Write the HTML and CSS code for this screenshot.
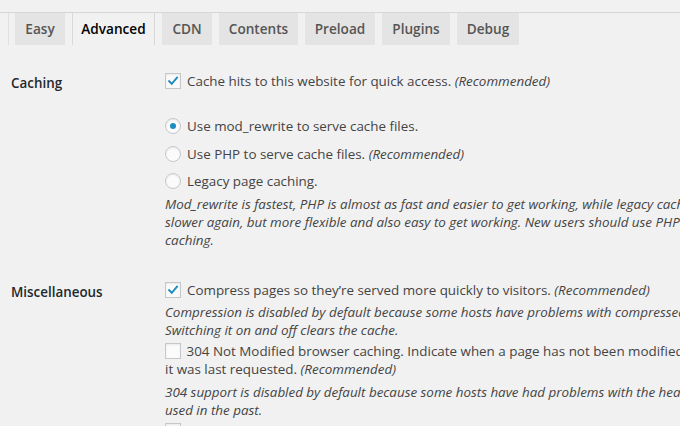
FILE: index.html
```html
<!DOCTYPE html>
<html>
<head>
<meta charset="utf-8">
<link rel="stylesheet" href="styles.css">
</head>
<body>
<div class="page">
  <div class="tabs">
    <span class="edge"></span>
    <span class="tab">Easy</span>
    <span class="tab active">Advanced</span>
    <span class="tab">CDN</span>
    <span class="tab">Contents</span>
    <span class="tab">Preload</span>
    <span class="tab">Plugins</span>
    <span class="tab">Debug</span>
  </div>

  <div class="row row-caching">
    <div class="label">Caching</div>
    <div class="field">
      <div class="line"><span class="cb checked"><svg viewBox="0 0 16 16"><path d="M3.6 8.2 L6.6 11.2 L12.6 4.2" /></svg></span><span class="txt">Cache hits to this website for quick access. <em>(Recommended)</em></span></div>
      <div class="radios">
        <div class="line radio-line"><span class="rd checked"></span><span class="txt">Use mod_rewrite to serve cache files.</span></div>
        <div class="line radio-line"><span class="rd"></span><span class="txt">Use PHP to serve cache files. <em>(Recommended)</em></span></div>
        <div class="line radio-line last"><span class="rd"></span><span class="txt">Legacy page caching.</span></div>
      </div>
      <p class="desc">Mod_rewrite is fastest, PHP is almost as fast and easier to get working, while legacy caching is<br>slower again, but more flexible and also easy to get working. New users should use PHP<br>caching.</p>
    </div>
  </div>

  <div class="row row-misc">
    <div class="label">Miscellaneous</div>
    <div class="field">
      <div class="line"><span class="cb checked"><svg viewBox="0 0 16 16"><path d="M3.6 8.2 L6.6 11.2 L12.6 4.2" /></svg></span><span class="txt">Compress pages so they’re served more quickly to visitors. <em>(Recommended)</em></span></div>
      <p class="desc d1">Compression is disabled by default because some hosts have problems with compressed files.<br>Switching it on and off clears the cache.</p>
      <div class="wrapline"><span class="cb inl"></span> 304 Not Modified browser caching. Indicate when a page has not been modified since<br>it was last requested. <em>(Recommended)</em></div>
      <p class="desc d2">304 support is disabled by default because some hosts have had problems with the headers<br>used in the past.</p>
      <div class="line"><span class="cb"></span><span class="txt">Don’t cache pages for known users. <em>(Recommended)</em></span></div>
    </div>
  </div>
</div>
</body>
</html>
```
FILE: styles.css
```css
html, body {
  margin: 0;
  padding: 0;
}
body {
  background: #f1f1f1;
  font-family: "Open Sans", "Noto Sans", sans-serif;
  color: #444;
  font-size: 13.4px;
  width: 680px;
  height: 426px;
  overflow: hidden;
}
.page {
  width: 680px;
  overflow: hidden;
}
.tabs {
  margin-top: 12px;
  border-top: 1px solid #d6d6d6;
  display: flex;
  gap: 7px;
  height: 32px;
  white-space: nowrap;
}
.edge {
  width: 1px;
  margin-left: 8px;
  background: #e0e0e0;
  margin-right: -1px;
}
.tab {
  display: flex;
  align-items: center;
  justify-content: center;
  padding: 0 8px;
  background: #e4e4e4;
  color: #555;
  font-size: 13.6px;
  font-weight: 600;
  line-height: 32px;
  box-sizing: border-box;
}
.tab:nth-child(2) { width: 50px; }
.tab.active {
  background: #f1f1f1;
  color: #000;
  border-left: 1px solid #d8d8d8;
  border-right: 1px solid #d8d8d8;
  width: 83px;
}
.tab:nth-child(4) { width: 50px; }
.tab:nth-child(5) { width: 79px; }
.tab:nth-child(6) { width: 70px; }
.tab:nth-child(7) { width: 68px; }
.tab:nth-child(8) { width: 62px; }

.row {
  display: grid;
  grid-template-columns: 154px 1fr;
  padding-left: 11px;
  white-space: nowrap;
}
.row-caching { margin-top: 27px; }
.row-misc { margin-top: 32px; }
.label {
  font-size: 13.4px;
  font-weight: 600;
  color: #23282d;
  line-height: 18px;
  padding-top: 2px;
}
.line {
  display: flex;
  align-items: center;
  height: 18px;
  line-height: 18px;
}
.txt { margin-left: 6px; }
em { font-style: italic; }

.cb {
  width: 16px;
  height: 16px;
  box-sizing: border-box;
  border: 1px solid #c4c8cc;
  background: #fbfbfb;
  box-shadow: inset 0 1px 2px rgba(0,0,0,0.08);
  flex: none;
  display: inline-block;
}
.cb svg {
  display: block;
  width: 14px;
  height: 14px;
}
.cb svg path {
  fill: none;
  stroke: #1e8cbe;
  stroke-width: 2.2;
  stroke-linecap: square;
}
.cb.inl {
  vertical-align: -3px;
  margin-right: 2px;
}

.radios { margin-top: 27px; }
.radio-line { height: 27.5px; align-items: flex-start; }
.radio-line.last { height: 18px; }
.rd {
  width: 16px;
  height: 16px;
  border-radius: 50%;
  box-sizing: border-box;
  border: 1px solid #c4c8cc;
  background: #fbfbfb;
  box-shadow: inset 0 1px 2px rgba(0,0,0,0.08);
  flex: none;
  position: relative;
  margin-top: 1px;
}
.rd.checked::after {
  content: "";
  position: absolute;
  left: 4px;
  top: 4px;
  width: 6px;
  height: 6px;
  border-radius: 50%;
  background: #1e8cbe;
}
.desc {
  margin: 5px 0 0;
  font-style: italic;
  line-height: 18px;
}
.desc.d1 { margin-top: 4px; }
.wrapline {
  margin-top: 3px;
  line-height: 18px;
}
.desc.d2 { margin-top: 5px; margin-bottom: 3px; }
```
